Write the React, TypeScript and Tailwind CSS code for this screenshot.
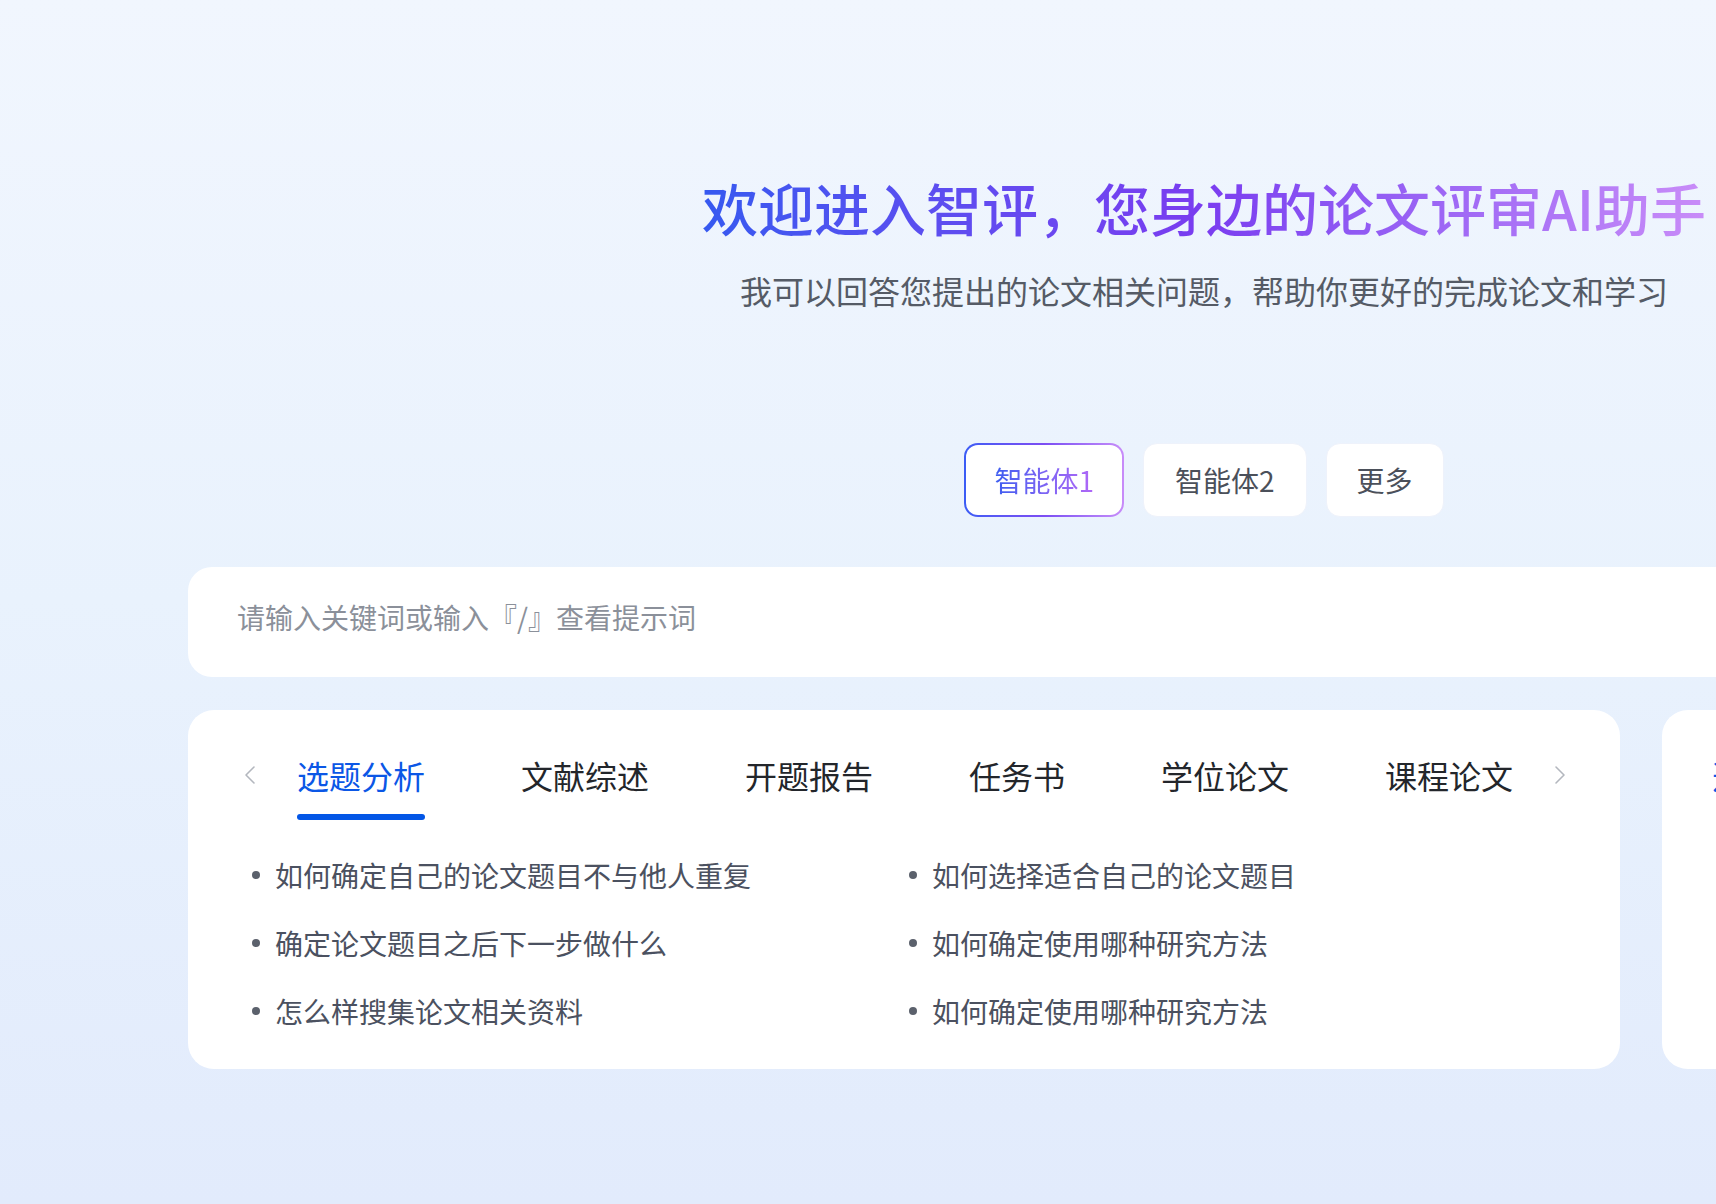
const tabs = ['选题分析', '文献综述', '开题报告', '任务书', '学位论文', '课程论文']

const questions = [
  ['如何确定自己的论文题目不与他人重复', '如何选择适合自己的论文题目'],
  ['确定论文题目之后下一步做什么', '如何确定使用哪种研究方法'],
  ['怎么样搜集论文相关资料', '如何确定使用哪种研究方法'],
]

function Chevron({ dir }: { dir: 'left' | 'right' }) {
  return (
    <svg className="w-[14px] h-[24px]" viewBox="0 0 14 24" fill="none" stroke="#b3b7be" strokeWidth={1.6} strokeLinecap="round" strokeLinejoin="round">
      {dir === 'left' ? <path d="M11 4 L3 12 L11 20" /> : <path d="M3 4 L11 12 L3 20" />}
    </svg>
  )
}

export default function App() {
  return (
    <div
      className="w-full h-[1204px] overflow-hidden bg-gradient-to-b from-[#f1f6fe] via-[#e9f2fd] to-[#e2ebfc]"
      style={{ fontFamily: '"Noto Sans CJK SC", "Noto Sans", sans-serif' }}
    >
      <div className="ml-[188px] w-[2032px] flex flex-col items-center pt-[173px]">
        <h1 className="text-[56px] leading-[67px] font-medium bg-gradient-to-r from-[#3559f0] via-[#7a3cf0] to-[#c98cf8] bg-clip-text text-transparent">
          欢迎进入智评，您身边的论文评审AI助手
        </h1>
        <p className="mt-[28px] text-[32px] leading-[44px] text-[#555b66]">
          我可以回答您提出的论文相关问题，帮助你更好的完成论文和学习
        </p>

        <div className="mt-[131px] flex gap-[19px]">
          <div className="p-[2px] rounded-[14px] bg-gradient-to-r from-[#3a5cf5] via-[#7c4df3] to-[#c88cf9]">
            <div className="h-[70px] px-[28px] rounded-[12px] bg-white flex items-center">
              <span className="text-[28px] bg-gradient-to-r from-[#3a5cf0] to-[#b067f7] bg-clip-text text-transparent">智能体1</span>
            </div>
          </div>
          <button className="h-[74px] px-[31px] rounded-[14px] bg-white border border-[#eef2fb] text-[28px] text-[#4b505a]">
            智能体2
          </button>
          <button className="h-[74px] px-[30px] rounded-[14px] bg-white border border-[#eef2fb] text-[28px] text-[#4b505a]">
            更多
          </button>
        </div>

        <div className="mt-[50px] w-full h-[110px] rounded-[24px] bg-white flex items-center pl-[49px] pb-[11px]">
          <span className="text-[28px] text-[#8b909a]">请输入关键词或输入『/』查看提示词</span>
        </div>

        <div className="mt-[33px] w-full flex gap-[42px]">
          <div className="w-[1432px] h-[359px] shrink-0 rounded-[26px] bg-white pt-[43px]">
            <div className="flex items-start pl-[55px]">
              <div className="h-[44px] flex items-center">
                <Chevron dir="left" />
              </div>
              <div className="ml-[40px] flex gap-[96px]">
                {tabs.map((t, i) => (
                  <div key={t} className="flex flex-col items-center">
                    <span className={`text-[32px] leading-[44px] ${i === 0 ? 'text-[#0b57e6]' : 'text-[#23262b]'}`}>{t}</span>
                    {i === 0 && <div className="mt-[17px] w-full h-[6px] rounded-full bg-[#0356e6]" />}
                  </div>
                ))}
              </div>
              <div className="ml-[40px] h-[44px] flex items-center">
                <Chevron dir="right" />
              </div>
            </div>

            <div className="mt-[35px] pl-[64px] flex flex-col gap-[28px]">
              {questions.map((row, r) => (
                <div key={r} className="grid grid-cols-[657px_1fr]">
                  {row.map((q, c) => (
                    <div key={c} className="flex items-center gap-[15px] h-[40px]">
                      <span className="w-[8px] h-[8px] rounded-full bg-[#5b616c]" />
                      <span className="text-[28px] text-[#4b5160]">{q}</span>
                    </div>
                  ))}
                </div>
              ))}
            </div>
          </div>

          <div className="w-[600px] h-[359px] shrink-0 rounded-[26px] bg-white pt-[43px] pl-[50px]">
            <span className="text-[32px] leading-[44px] text-[#0b57e6]">选题分析</span>
          </div>
        </div>
      </div>
    </div>
  )
}
